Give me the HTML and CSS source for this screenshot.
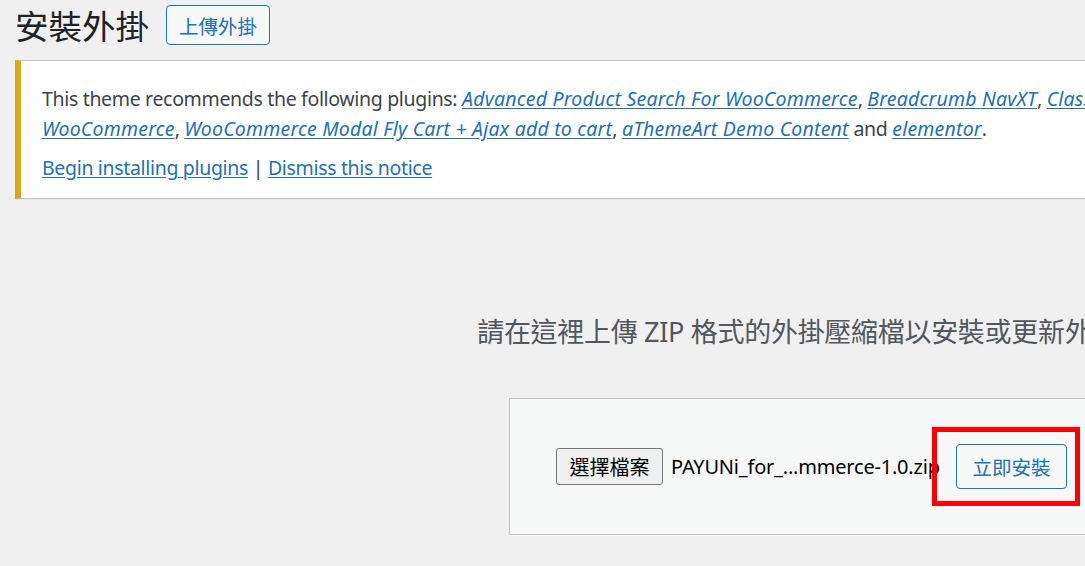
FILE: index.html
```html
<!DOCTYPE html>
<html lang="zh-Hant">
<head>
<meta charset="utf-8">
<title>安裝外掛</title>
<link rel="stylesheet" href="styles.css">
</head>
<body>
<div class="wrap">
  <div class="title-row">
    <h1 class="page-title">安裝外掛</h1>
    <a class="title-action" href="#">上傳外掛</a>
  </div>

  <div class="notice">
    <p class="notice-text">This theme recommends the following plugins: <em><a href="#">Advanced Product Search For WooCommerce</a></em>, <em><a href="#">Breadcrumb NavXT</a></em>, <em><a href="#">Classic Widgets</a></em>, <em><a href="#">Variation Swatches for</a></em><br><em><a href="#">WooCommerce</a></em>, <em><a href="#">WooCommerce Modal Fly Cart + Ajax add to cart</a></em>, <em><a href="#">aThemeArt Demo Content</a></em> and <em><a href="#">elementor</a></em>.</p>
    <p class="notice-actions"><a href="#">Begin installing plugins</a> | <a href="#">Dismiss this notice</a></p>
  </div>

  <div class="upload-plugin">
    <p class="install-help">請在這裡上傳 ZIP 格式的外掛壓縮檔以安裝或更新外掛。</p>
    <form class="upload-form">
      <div class="file-field">
        <span class="file-btn">選擇檔案</span>
        <span class="file-name">PAYUNi_for_...mmerce-1.0.zip</span>
      </div>
      <div class="install-wrap">
        <button type="button" class="install-btn">立即安裝</button>
        <span class="highlight"></span>
      </div>
    </form>
  </div>
</div>
</body>
</html>
```

FILE: styles.css
```css
html, body {
  margin: 0;
  padding: 0;
}

body {
  background: #f0f0f1;
  color: #3c434a;
  font-family: "Noto Sans", "Noto Sans CJK TC", sans-serif;
  font-size: 19.5px;
  overflow: hidden;
  width: 1085px;
  height: 566px;
}

.wrap {
  width: 1592px;
  padding-left: 15px;
}

.title-row {
  display: flex;
  align-items: center;
  height: 50px;
  gap: 17px;
}

.page-title {
  margin: 0;
  font-family: "Noto Sans CJK TC", sans-serif;
  font-size: 33.5px;
  font-weight: 400;
  color: #1d2327;
  line-height: 1.2;
}

.title-action {
  display: inline-flex;
  align-items: center;
  box-sizing: border-box;
  height: 40px;
  padding: 0 12px;
  border: 1px solid #2271b1;
  border-radius: 4px;
  background: #f6f7f7;
  color: #2271b1;
  font-family: "Noto Sans CJK TC", sans-serif;
  font-size: 19.5px;
  text-decoration: none;
}

.notice {
  margin-top: 10px;
  background: #fff;
  border: 1px solid #c3c4c7;
  border-left: 6px solid #dba617;
  padding: 0 21px;
  box-shadow: 0 1px 1px rgba(0,0,0,0.04);
}

.notice p {
  line-height: 30px;
  letter-spacing: -0.33px;
}

.notice a {
  color: #2271b1;
  text-decoration: underline;
  text-underline-offset: 2px;
}

.notice em a {
  letter-spacing: 0.2px;
}

.notice-text {
  margin: 23px 0 0;
  white-space: nowrap;
}

.notice-actions {
  margin: 9px 0 15px;
}

.upload-plugin {
  text-align: center;
}

.install-help {
  margin: 113px 0 0;
  line-height: 40px;
  font-size: 27px;
  letter-spacing: -0.3px;
  color: #50575e;
}

.upload-form {
  display: inline-flex;
  align-items: center;
  gap: 16px;
  margin-top: 46px;
  padding: 45px 45px 45px 46px;
  background: #f6f7f7;
  border: 1px solid #c3c4c7;
}

.file-field {
  display: flex;
  align-items: center;
  width: 384px;
  gap: 8px;
  overflow: hidden;
  white-space: nowrap;
}

.file-btn {
  display: inline-flex;
  align-items: center;
  justify-content: center;
  flex: 0 0 auto;
  box-sizing: border-box;
  width: 107px;
  height: 37px;
  background: #efefef;
  border: 1px solid #767676;
  border-radius: 3px;
  color: #000;
  font-family: "Noto Sans CJK TC", sans-serif;
  font-size: 20px;
}

.file-name {
  color: #000;
  font-size: 20px;
  letter-spacing: -0.2px;
}

.install-wrap {
  position: relative;
  display: flex;
}

.install-btn {
  box-sizing: border-box;
  width: 111px;
  height: 45px;
  padding: 0;
  background: #f6f7f7;
  border: 1px solid #2271b1;
  border-radius: 4px;
  color: #2271b1;
  font-family: "Noto Sans CJK TC", sans-serif;
  font-size: 19.5px;
}

.highlight {
  position: absolute;
  top: -17px;
  bottom: -17px;
  left: -24px;
  right: -13px;
  border: 5px solid #ff0000;
  pointer-events: none;
}
```
